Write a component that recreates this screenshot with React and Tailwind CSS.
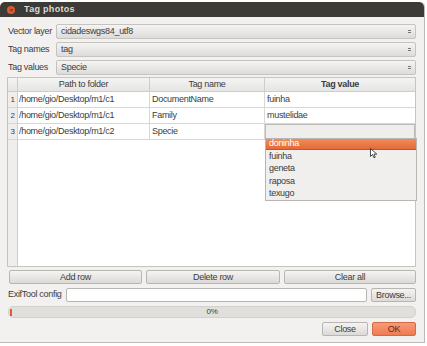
import React from 'react';

const font = { fontFamily: '"Liberation Sans", Arial, sans-serif' };

const Combo = ({ label, value }) => (
  <div className="flex items-center h-[15px]">
    <div className="w-[49px] pl-[1px] text-[9px] text-[#3c3c3c] whitespace-nowrap">{label}</div>
    <div className="flex-1 h-full flex items-center justify-between px-[4px] rounded-[2px] border border-[#c4c3c0] bg-gradient-to-b from-[#f4f4f3] to-[#dedcda] text-[9px] text-[#3c3c3c]">
      <span>{value}</span>
      <span className="flex flex-col gap-[1px]">
        <span className="block w-[3px] h-[1px] bg-[#777]" />
        <span className="block w-[3px] h-[1px] bg-[#777]" />
      </span>
    </div>
  </div>
);

const rows = [
  ['1', '/home/gio/Desktop/m1/c1', 'DocumentName', 'fuinha'],
  ['2', '/home/gio/Desktop/m1/c1', 'Family', 'mustelidae'],
  ['3', '/home/gio/Desktop/m1/c2', 'Specie', ''],
];

const Btn = ({ children, className = '' }) => (
  <button className={`h-[14px] rounded-[2px] border border-[#b8b6b3] bg-gradient-to-b from-[#f5f4f3] to-[#dcdad7] text-[9px] text-[#3c3c3c] ${className}`}>
    {children}
  </button>
);

export default function App() {
  return (
    <div className="w-[427px] h-[346px] bg-white overflow-hidden tracking-[-0.3px]" style={font}>
      <div className="mt-[2px] w-[425px] h-[341px] flex flex-col bg-[#f2f1f0] border-r border-b border-[#bdbbb8] rounded-t-[5px]">
        <div className="h-[15px] shrink-0 flex items-center rounded-t-[5px] bg-[#3c3b37] pl-[7px]">
          <div className="w-[8px] h-[8px] rounded-full bg-[#e0592c] flex items-center justify-center text-[6px] leading-none text-[#3c3b37] font-bold">×</div>
          <div className="ml-[9px] text-[9px] font-bold text-[#dfdbd2] tracking-[0.3px]">Tag photos</div>
        </div>

        <div className="flex-1 flex flex-col px-[7px] pr-[8px] pt-[7px]">
          <div className="flex flex-col gap-[3px]">
            <Combo label="Vector layer" value="cidadeswgs84_utf8" />
            <Combo label="Tag names" value="tag" />
            <Combo label="Tag values" value="Specie" />
          </div>

          <div className="relative mt-[2px] h-[190px] border border-[#c6c4c1] bg-white">
            <div className="flex h-[14px] bg-gradient-to-b from-[#f4f4f3] to-[#e6e5e3] border-b border-[#cfcdca] text-[9px] text-[#3c3c3c]">
              <div className="w-[10px] border-r border-[#cfcdca]" />
              <div className="w-[132px] border-r border-[#cfcdca] flex items-center justify-center">Path to folder</div>
              <div className="w-[115px] border-r border-[#cfcdca] flex items-center justify-center">Tag name</div>
              <div className="flex-1 flex items-center justify-center font-bold">Tag value</div>
            </div>
            <div className="flex">
              <div className="w-[10px] h-[174px] bg-[#efeeed] border-r border-[#cfcdca] flex flex-col">
                {rows.map((r) => (
                  <div key={r[0]} className="h-[16px] border-b border-[#d9d7d4] flex items-center justify-center text-[8px] text-[#3c3c3c]">{r[0]}</div>
                ))}
              </div>
              <div className="flex-1 flex flex-col">
                {rows.map((r, i) => (
                  <div key={r[0]} className="flex h-[16px] border-b border-[#d9d7d4] text-[9px] text-[#3c3c3c]">
                    <div className="w-[132px] border-r border-[#d9d7d4] flex items-center pl-[1px]">{r[1]}</div>
                    <div className="w-[115px] border-r border-[#d9d7d4] flex items-center pl-[2px]">{r[2]}</div>
                    {i < 2 ? (
                      <div className="flex-1 flex items-center pl-[2px]">{r[3]}</div>
                    ) : (
                      <div className="flex-1 bg-[#efeeed] border border-[#bdbbb8]" />
                    )}
                  </div>
                ))}
              </div>
            </div>

            <div className="absolute left-[257px] top-[60px] w-[152px] h-[63px] bg-[#f0efee] border border-[#b8b6b3] text-[9px] text-[#3c3c3c] flex flex-col">
              <div className="h-[11px] bg-gradient-to-b from-[#f38a5c] to-[#e46a34] border-b border-[#c5552a] text-white pl-[3px] flex items-center">doninha</div>
              {['fuinha', 'geneta', 'raposa', 'texugo'].map((v) => (
                <div key={v} className="h-[12.5px] pl-[3px] flex items-center">{v}</div>
              ))}
              <svg className="absolute left-[104px] top-[9px]" width="8" height="11" viewBox="0 0 8 11">
                <path d="M0.5 0.5 L0.5 8.5 L2.5 6.5 L4 9.8 L5.3 9.2 L3.9 6.1 L6.8 6.1 Z" fill="#fff" stroke="#222" strokeWidth="0.8" />
              </svg>
            </div>
          </div>

          <div className="mt-[3px] flex gap-[4px] pl-[2px]">
            <Btn className="w-[133px]">Add row</Btn>
            <Btn className="w-[134px]">Delete row</Btn>
            <Btn className="flex-1">Clear all</Btn>
          </div>

          <div className="mt-[4px] flex items-center h-[14px]">
            <div className="w-[59px] pl-[1px] text-[9px] text-[#3c3c3c] whitespace-nowrap">ExifTool config</div>
            <div className="w-[301px] h-full bg-white border border-[#b8b6b3] rounded-[2px]" />
            <Btn className="ml-[4px] flex-1">Browse...</Btn>
          </div>

          <div className="mt-[4px] ml-[1px] relative h-[12px] rounded-[5px] bg-[#e1dfdc] border border-[#d3d1ce] flex items-center justify-center text-[8px] text-[#3c3c3c]">
            <div className="absolute left-[1px] top-[2px] w-[2px] h-[7px] bg-[#e0592c]" />
            0%
          </div>

          <div className="mt-[4px] flex justify-end gap-[4px]">
            <Btn className="w-[46px]">Close</Btn>
            <button className="w-[44px] h-[14px] rounded-[2px] border border-[#d46a45] bg-gradient-to-b from-[#f79a77] to-[#ee7b52] text-[9px] text-[#5a2a18]">OK</button>
          </div>
        </div>
      </div>
    </div>
  );
}
